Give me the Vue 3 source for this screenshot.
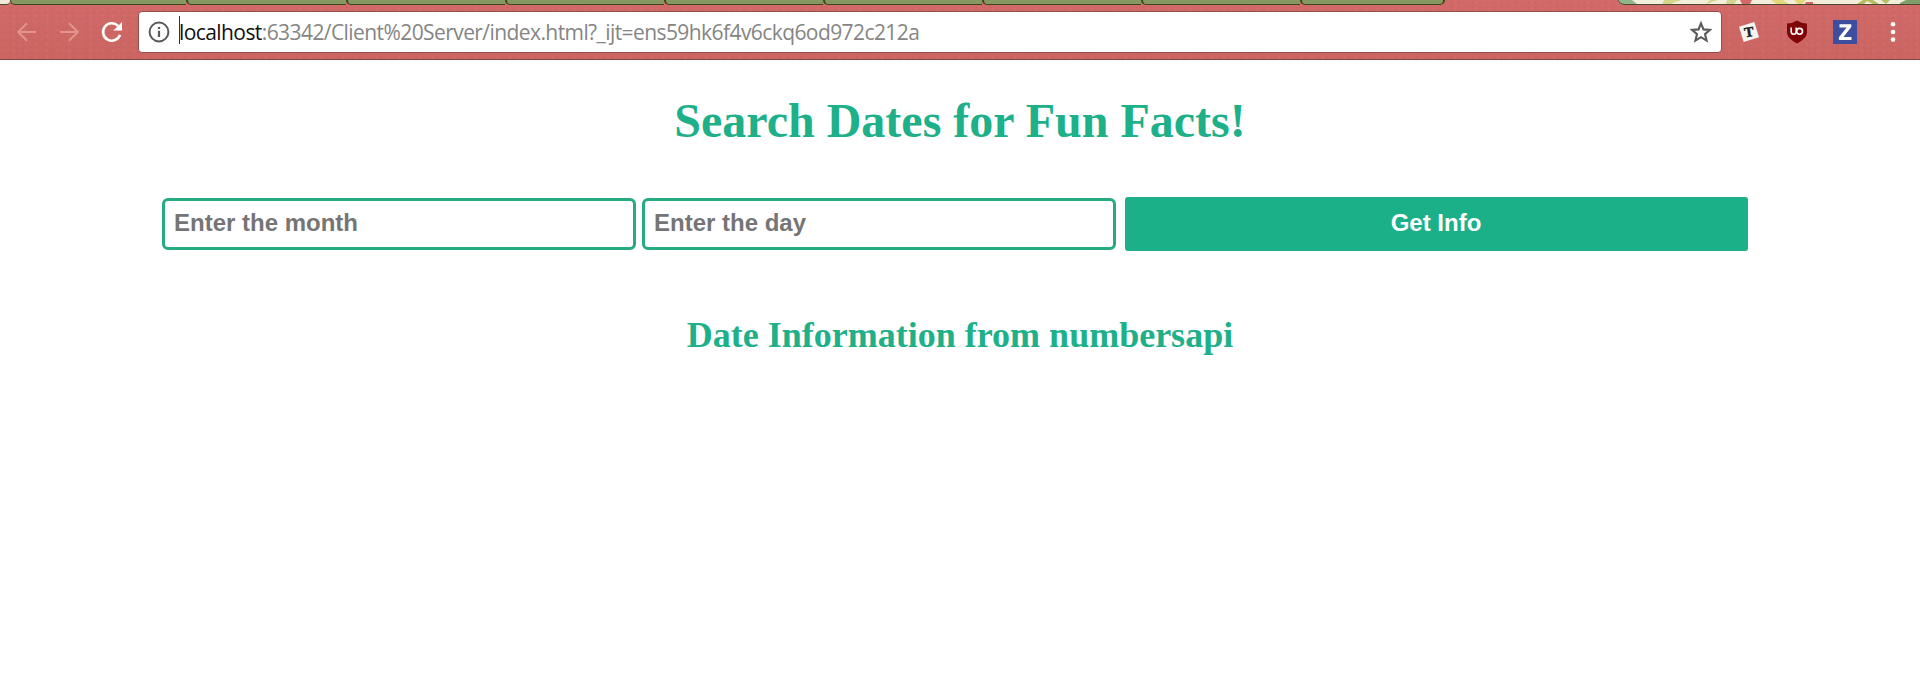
<script setup>
const tabs = [
  { w: 176 }, { w: 160 }, { w: 159 }, { w: 159 }, { w: 159 },
  { w: 159 }, { w: 159 }, { w: 159 }, { w: 145 },
]
</script>

<template>
  <div class="page">
    <header class="chrome">
      <div class="strip">
        <i class="edge"></i>
        <i v-for="(t, i) in tabs" :key="i" class="tab" :style="{ width: t.w + 'px' }"></i>
        <svg class="floral" width="302" height="5" viewBox="0 0 302 5">
          <path d="M0 0H302V4.500H5Q2 4.500 0 0Z" fill="#f3eedb" />
          <path d="M1 0H14Q18 3 20 5H5Q2 4 1 0Z" fill="#8fb588" />
          <path d="M46 0H64L57 2 51 5H44ZM92 0H100L88 4ZM109 0H119L116 4H108Z" fill="#d3d58c" />
          <path d="M122 0H134L132 4H124ZM188 2H195V4H187Z" fill="#d26868" />
          <path d="M153 0H165L171 4H158ZM176 0H188L184 4H180Z" fill="#e4d779" />
          <path d="M239 4L245 0H255L261 4H255L249 1 246 4ZM263 0H272L268 4Z" fill="#b5bd5e" />
          <path d="M282 3L288 0H302V4H282Z" fill="#7e9f69" />
          <path d="M0 0Q2 4.500 6 4.500H302" fill="none" stroke="#4d4630" />
        </svg>
      </div>
      <div class="toolbar">
        <svg class="arrow" width="20" height="20" viewBox="0 0 20 20"><path d="M19 10H1.500M10 1.200L1.200 10 10 18.800" /></svg>
        <svg class="arrow fwd" width="20" height="20" viewBox="0 0 20 20"><path d="M1 10H18.500M10 1.200L18.800 10 10 18.800" /></svg>
        <svg class="reload" width="22" height="22" viewBox="0 0 22 22">
          <path d="M19 13.800A8.700 8.700 0 1 1 17 4.900" fill="none" stroke="#fff" stroke-width="2.600" />
          <path d="M21 1V9.500H12.400Z" fill="#fff" />
        </svg>
        <div class="omnibox">
          <svg class="info" width="22" height="22" viewBox="0 0 22 22">
            <circle cx="11" cy="11" r="9.400" fill="none" stroke="#5a5a5a" stroke-width="2" />
            <path d="M9.900 9.800H12.100V16H9.900ZM9.900 5.900H12.100V8H9.900Z" fill="#5a5a5a" />
          </svg>
          <i class="caret"></i>
          <span class="url"><b>localhost</b>:63342/Client%20Server/index.html?_ijt=ens59hk6f4v6ckq6od972c212a</span>
          <svg class="star" width="22" height="22" viewBox="0 0 22 22">
            <path d="M11 2.300L13.500 8.400 20 8.900 15 13.200 16.600 19.600 11 16.200 5.400 19.600 7 13.200 2 8.900 8.500 8.400Z" fill="none" stroke="#5a5a5a" stroke-width="2.100" />
          </svg>
        </div>
        <svg class="ext-t" width="22" height="22" viewBox="0 0 22 22">
          <g transform="rotate(-17 11 11)">
            <rect x="3" y="3" width="16" height="16" fill="#f7f4f2" />
            <text x="11" y="15.700" text-anchor="middle" font-family="Liberation Serif, serif" font-weight="bold" font-size="14" fill="#222" stroke="#222" stroke-width=".5" transform="rotate(9 11 11)">T</text>
          </g>
        </svg>
        <svg class="ublock" width="22" height="24" viewBox="0 0 22 24">
          <path d="M11 .5Q15 3.300 21 3.500V13Q20.500 18.500 11 23.500 1.500 18.500 1 13V3.500Q7 3.300 11 .5Z" fill="#800509" />
          <path d="M5.200 7.500V11.500Q5.200 14.200 7.700 14.200T10.200 11.500V7.500" fill="none" stroke="#fff" stroke-width="1.600" />
          <circle cx="13.600" cy="11.300" r="2.900" fill="none" stroke="#fff" stroke-width="1.600" />
        </svg>
        <svg class="zed" width="24" height="24" viewBox="0 0 24 24">
          <rect width="24" height="24" fill="#3d4da0" />
          <path d="M6.500 4.300H18.300V7L10.500 16.900H18.500V20H5.900V17.300L13.600 7.400H6.500Z" fill="#fff" />
        </svg>
        <svg class="menu" width="6" height="22" viewBox="0 0 6 22" fill="#fff"><circle cx="3" cy="3.200" r="2.300" /><circle cx="3" cy="11" r="2.300" /><circle cx="3" cy="18.600" r="2.300" /></svg>
      </div>
    </header>
    <main>
      <h1>Search Dates for Fun Facts!</h1>
      <form class="search" @submit.prevent>
        <input type="text" placeholder="Enter the month" />
        <input type="text" placeholder="Enter the day" />
        <button type="submit">Get Info</button>
      </form>
      <h2>Date Information from numbersapi</h2>
    </main>
  </div>
</template>

<style>
body { background: #fff; overflow: hidden; }
</style>

<style scoped>
* { box-sizing: border-box; }
.page { height: 685px; background: #fff; }
.chrome {
  height: 60px;
  border-bottom: 1px solid #8a4644;
  background:
    radial-gradient(circle at 3px 2px, rgba(225, 120, 112, .22) 0 1px, transparent 2px) 0 0 / 11px 7px,
    radial-gradient(circle at 3px 3px, rgba(178, 88, 90, .14) 0 1px, transparent 2px) 0 0 / 7px 5px,
    linear-gradient(#d16a68, #ca6562);
}
.strip { display: flex; height: 5px; }
.edge { width: 10px; background: #f1e8db; border-bottom: 1px solid #4d4630; border-radius: 0 0 4px 0; }
.tab {
  height: 5px;
  background: #86985f;
  border-bottom: 1px solid #3c4420;
  border-left: 2px solid #3c4420;
  border-bottom-left-radius: 5px;
}
.edge + .tab { border-left-width: 1px; }
.tab:last-of-type { border-right: 2px solid #3c4420; border-bottom-right-radius: 5px; }
.floral { margin-left: auto; }
.toolbar { display: flex; align-items: center; height: 54px; padding: 0 24px 0 17px; }
.toolbar > svg { flex: none; }
.arrow { fill: none; stroke: #e19490; stroke-width: 2; }
.fwd { margin-left: 22px; }
.reload { margin-left: 22px; }
.omnibox {
  display: flex;
  align-items: center;
  width: 1584px;
  height: 42px;
  margin-left: 15px;
  flex: none;
  padding: 0 9px;
  background: #fff;
  border: 1px solid #954b48;
  border-radius: 4px;
}
.caret { width: 1px; height: 28px; margin: -4px -1px 0 9px; background: #333; }
.url {
  font: 21px/30px "Open Sans", "Noto Sans", sans-serif;
  color: #858585;
  white-space: nowrap;
  letter-spacing: -.58px;
}
.url b { font-weight: 400; color: #111; }
.star { margin-left: auto; }
.ext-t { margin-left: 16px; }
.ublock { margin-left: 26px; }
.zed { margin-left: 25px; }
.menu { margin-left: auto; }
main { text-align: center; color: #1eb089; font-family: "Liberation Serif", serif; }
h1 { margin: 33px 0 0; font-size: 48px; line-height: 56px; }
.search { display: flex; align-items: center; width: 1586px; margin: 48px 0 0 162px; }
input {
  width: 474px;
  height: 52px;
  margin-right: 6px;
  padding: 0 9px 2px;
  border: 3px solid #27a982;
  border-radius: 6px;
  background: #fff;
  outline: none;
  font: bold 24px "Liberation Sans", sans-serif;
}
input::placeholder { color: #757575; opacity: 1; }
button {
  flex: 1;
  height: 54px;
  margin-left: 3px;
  padding: 0 1px 2px 0;
  border: 0;
  border-radius: 3px;
  background: #1cb088;
  color: #fff;
  font: bold 24px "Liberation Sans", sans-serif;
}
h2 { margin: 63px 0 0; font-size: 36px; line-height: 42px; }
</style>
